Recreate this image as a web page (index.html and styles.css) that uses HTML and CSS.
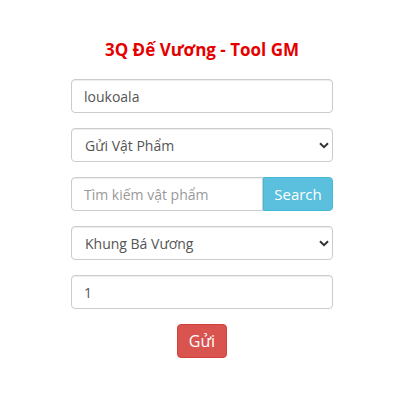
FILE: index.html
```html
<!DOCTYPE html>
<html>

<head lang="vi">
    <meta charset="UTF-8">
    <title>3Q Đế Vương - Tool GM</title>
    <link rel="stylesheet" href="styles.css">
</head>

<body>
    <div class="gm-box">
        <h3 class="gm-title">3Q Đế Vương - Tool GM</h3>

        <div class="gm-row">
            <input type="text" class="gm-input" value="loukoala">
        </div>

        <div class="gm-row gm-select-wrap">
            <select class="gm-input gm-select">
                <option>Gửi Vật Phẩm</option>
            </select>
            <svg class="gm-arrow" width="10" height="7" viewBox="0 0 10 7">
                <path d="M1 1.2 L5 5.2 L9 1.2" fill="none" stroke="#333" stroke-width="2"></path>
            </svg>
        </div>

        <div class="gm-row gm-group">
            <input type="text" class="gm-input gm-group-input" placeholder="Tìm kiếm vật phẩm">
            <a href="javascript:void(0);" class="gm-btn gm-btn-info">Search</a>
        </div>

        <div class="gm-row gm-select-wrap">
            <select class="gm-input gm-select">
                <option>Khung Bá Vương</option>
            </select>
            <svg class="gm-arrow" width="10" height="7" viewBox="0 0 10 7">
                <path d="M1 1.2 L5 5.2 L9 1.2" fill="none" stroke="#333" stroke-width="2"></path>
            </svg>
        </div>

        <div class="gm-row">
            <input type="text" class="gm-input" value="1">
        </div>

        <div class="gm-submit">
            <a href="javascript:void(0);" class="gm-btn gm-btn-danger">Gửi</a>
        </div>
    </div>
</body>

</html>
```

FILE: styles.css
```css
html,
body,
div,
h3,
a {
    padding: 0px;
    margin: 0px;
}

body {
    background: #ffffff;
    font-family: "Open Sans", "Noto Sans", sans-serif;
    font-size: 14px;
    color: #555555;
}

a {
    text-decoration: none;
}

.gm-box {
    width: 262px;
    margin-left: 71px;
    padding-top: 39px;
}

.gm-title {
    text-align: center;
    color: #e50000;
    font-size: 17px;
    font-weight: bold;
    line-height: 22px;
    height: 22px;
    margin-bottom: 18px;
}

.gm-row {
    margin-bottom: 15px;
}

.gm-input {
    display: block;
    box-sizing: border-box;
    width: 100%;
    height: 34px;
    padding: 0px 12px;
    font-family: "Open Sans", "Noto Sans", sans-serif;
    font-size: 14px;
    color: #555555;
    background: #ffffff;
    border: 1px solid #cccccc;
    border-radius: 4px;
    box-shadow: inset 0 1px 1px rgba(0, 0, 0, .075);
    outline: none;
}

.gm-input::placeholder {
    color: #999999;
}

.gm-select-wrap {
    position: relative;
}

.gm-select {
    -webkit-appearance: none;
    appearance: none;
    padding-left: 13px;
}

.gm-arrow {
    position: absolute;
    right: 4px;
    top: 14px;
}

.gm-group {
    display: flex;
}

.gm-group-input {
    flex: 1;
    border-radius: 4px 0px 0px 4px;
}

.gm-btn {
    display: block;
    box-sizing: border-box;
    height: 34px;
    line-height: 32px;
    font-size: 15px;
    color: #ffffff;
    text-align: center;
    border: 1px solid transparent;
    border-radius: 4px;
}

.gm-btn-info {
    width: 70px;
    background: #5bc0de;
    border-color: #46b8da;
    border-radius: 0px 4px 4px 0px;
}

.gm-btn-danger {
    width: 50px;
    font-size: 16px;
    background: #d9534f;
    border-color: #d43f3a;
}

.gm-submit {
    display: flex;
    justify-content: center;
}
```
